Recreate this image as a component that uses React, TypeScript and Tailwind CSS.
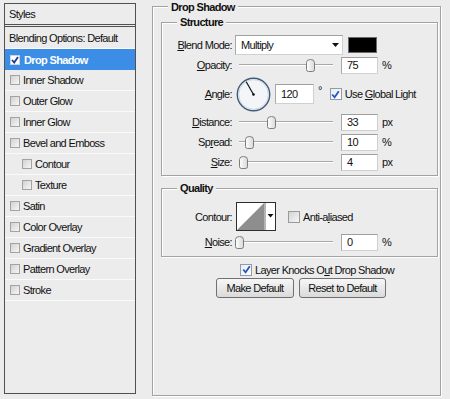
import React from "react";

function LeftCheck({ checked = false }: { checked?: boolean }) {
  if (checked) {
    return (
      <span className="w-[10px] h-[10px] bg-white border border-[#c9d3e3] flex items-center justify-center shrink-0">
        <svg width="8" height="8" viewBox="0 0 8 8">
          <path d="M1 4 L3.2 6.5 L7 1" stroke="#1e3a8a" strokeWidth="1.8" fill="none" />
        </svg>
      </span>
    );
  }
  return (
    <span className="w-[10px] h-[10px] border border-[#a3a3a3] bg-linear-to-br from-[#d2d2d2] to-[#f6f6f6] shrink-0" />
  );
}

function Check({ checked = false }: { checked?: boolean }) {
  if (checked) {
    return (
      <span className="w-[12px] h-[12px] bg-linear-to-br from-[#e8ecf2] to-[#ffffff] border border-[#8c9bb0] flex items-center justify-center shrink-0">
        <svg width="9" height="9" viewBox="0 0 9 9">
          <path d="M1.2 4.5 L3.6 7.3 L7.8 1.2" stroke="#2a56b8" strokeWidth="1.8" fill="none" />
        </svg>
      </span>
    );
  }
  return (
    <span className="w-[12px] h-[12px] border border-[#9a9a9a] bg-linear-to-br from-[#d4d4d4] to-[#f6f6f6] shrink-0" />
  );
}

function Slider({ pos }: { pos: number }) {
  return (
    <div className="relative w-[100px] h-[20px] shrink-0">
      <div className="absolute left-[3px] right-[3px] top-[9px] h-[2px] border-t border-[#a8a8a8] border-b border-b-white" />
      <svg
        width="9"
        height="13"
        viewBox="0 0 9 13"
        className="absolute top-[4px]"
        style={{ left: pos - 4.5 }}
      >
        <defs>
          <linearGradient id="tg" x1="0" y1="0" x2="1" y2="0">
            <stop offset="0" stopColor="#ffffff" />
            <stop offset="1" stopColor="#d8d8d8" />
          </linearGradient>
        </defs>
        <path d="M0.5 3.5 Q0.5 0.5 4.5 0.5 Q8.5 0.5 8.5 3.5 L8.5 10.5 Q8.5 12.5 6.5 12.5 L2.5 12.5 Q0.5 12.5 0.5 10.5 Z" fill="url(#tg)" stroke="#7c7c7c" />
      </svg>
    </div>
  );
}

function NumBox({ value, w = "w-[37px] h-[17px]" }: { value: string; w?: string }) {
  return (
    <div className={`${w} bg-white border border-[#d0d0d0] border-t-[#9e9e9e] border-l-[#a8a8a8] flex items-center pl-[5px] shrink-0`}>
      {value}
    </div>
  );
}

function SliderRow({
  label,
  pos,
  value,
  unit,
}: {
  label: React.ReactNode;
  pos: number;
  value: string;
  unit: string;
}) {
  return (
    <div className="h-[20px] flex items-center">
      <div className="w-[70px] text-right shrink-0">{label}</div>
      <div className="ml-[4px]">
        <Slider pos={pos} />
      </div>
      <div className="ml-[5px]">
        <NumBox value={value} />
      </div>
      <span className="ml-[4px]">{unit}</span>
    </div>
  );
}

const leftItems: { label: string; indent?: boolean }[] = [
  { label: "Inner Shadow" },
  { label: "Outer Glow" },
  { label: "Inner Glow" },
  { label: "Bevel and Emboss" },
  { label: "Contour", indent: true },
  { label: "Texture", indent: true },
  { label: "Satin" },
  { label: "Color Overlay" },
  { label: "Gradient Overlay" },
  { label: "Pattern Overlay" },
  { label: "Stroke" },
];

export default function App() {
  return (
    <div className="w-[450px] h-[399px] bg-[#ececec] flex items-start overflow-hidden text-[11px] leading-[14px] tracking-[-0.65px] text-[#111] font-['Liberation_Sans',Arial,sans-serif]">
      {/* Left styles panel */}
      <div className="ml-[4px] mt-[3px] w-[132px] h-[391px] border border-[#505050] flex flex-col shrink-0">
        <div className="h-[23px] flex items-center pl-[4px] border-b-[3px] border-double border-[#505050]">
          Styles
        </div>
        <div className="h-[22px] flex items-center pl-[4px] border-b border-[#fafafa]">
          Blending Options: Default
        </div>
        <div className="h-[21px] flex items-center pl-[5px] bg-[#3b8de6] text-white font-bold">
          <LeftCheck checked />
          <span className="ml-[4px]">Drop Shadow</span>
        </div>
        {leftItems.map((it) => (
          <div
            key={it.label}
            className={
              it.indent
                ? "h-[21px] flex items-center pl-[17px] border-b border-[#fafafa]"
                : "h-[21px] flex items-center pl-[5px] border-b border-[#fafafa]"
            }
          >
            <LeftCheck />
            <span className="ml-[3px]">{it.label}</span>
          </div>
        ))}
      </div>

      {/* Right: Drop Shadow group */}
      <div className="ml-[16px] mt-[6px] w-[289px] h-[390px] relative border border-[#a2a2a2] shadow-[inset_1px_1px_0_#fff,1px_1px_0_#fff] flex flex-col items-start shrink-0">
        <span className="absolute left-[15px] top-[-7px] px-[3px] bg-[#ececec] font-bold">Drop Shadow</span>

        {/* Structure */}
        <div className="ml-[8px] mt-[15px] w-[277px] relative border border-[#a2a2a2] shadow-[inset_1px_1px_0_#fff,1px_1px_0_#fff] pt-[12px] pb-[3px] flex flex-col">
          <span className="absolute left-[15px] top-[-8px] px-[3px] bg-[#ececec] font-bold">Structure</span>

          <div className="h-[20px] flex items-center">
            <div className="w-[70px] text-right shrink-0">
              <span className="underline">B</span>lend Mode:
            </div>
            <div className="ml-[3px] w-[108px] h-[20px] bg-white border border-[#d0d0d0] border-t-[#a0a0a0] border-l-[#a8a8a8] flex items-center justify-between pl-[5px] pr-[3px]">
              <span>Multiply</span>
              <svg width="7" height="4" viewBox="0 0 7 4">
                <path d="M0 0 L7 0 L3.5 4 Z" fill="#111" />
              </svg>
            </div>
            <div className="ml-[5px] w-[29px] h-[16px] bg-black border border-[#6a6a6a]" />
          </div>

          <SliderRow
            label={
              <>
                <span className="underline">O</span>pacity:
              </>
            }
            pos={74}
            value="75"
            unit="%"
          />

          <div className="mt-[1px] h-[36px] flex items-center">
            <div className="w-[70px] text-right shrink-0">
              <span className="underline">A</span>ngle:
            </div>
            <svg width="35" height="35" viewBox="0 0 35 35" className="ml-[4px] shrink-0">
              <circle cx="17.5" cy="17.5" r="16.2" fill="#f3f5f8" stroke="#3f5a7a" strokeWidth="1.4" />
              <circle cx="17.5" cy="17.5" r="14.8" fill="none" stroke="#c9d2dc" strokeWidth="0.8" />
              <line x1="17.5" y1="17.5" x2="10.2" y2="4.8" stroke="#111" strokeWidth="1.2" />
              <circle cx="17.5" cy="17.5" r="1.3" fill="#111" />
            </svg>
            <div className="ml-[4px]">
              <NumBox value="120" w="w-[39px] h-[20px]" />
            </div>
            <span className="ml-[4px] self-start mt-[9px] leading-[10px]">°</span>
            <div className="ml-[8px] flex items-center">
              <Check checked />
              <span className="ml-[3px]">
                Use <span className="underline">G</span>lobal Light
              </span>
            </div>
          </div>

          <SliderRow
            label={
              <>
                <span className="underline">D</span>istance:
              </>
            }
            pos={35}
            value="33"
            unit="px"
          />
          <SliderRow
            label={
              <>
                Sp<span className="underline">r</span>ead:
              </>
            }
            pos={13}
            value="10"
            unit="%"
          />
          <SliderRow
            label={
              <>
                <span className="underline">S</span>ize:
              </>
            }
            pos={7}
            value="4"
            unit="px"
          />
        </div>

        {/* Quality */}
        <div className="ml-[8px] mt-[12px] w-[277px] relative border border-[#a2a2a2] shadow-[inset_1px_1px_0_#fff,1px_1px_0_#fff] pt-[13px] pb-[4px] flex flex-col">
          <span className="absolute left-[15px] top-[-8px] px-[3px] bg-[#ececec] font-bold">Quality</span>

          <div className="h-[29px] flex items-center">
            <div className="w-[70px] text-right shrink-0">Contour:</div>
            <svg width="40" height="29" viewBox="0 0 40 29" className="ml-[4px] shrink-0">
              <rect x="0.5" y="0.5" width="39" height="28" fill="#ffffff" stroke="#2e2e2e" />
              <polygon points="1,28 28,1 28,28" fill="#8e8e8e" />
              <rect x="28" y="1" width="2" height="27" fill="#b5b5b5" />
              <path d="M31.5 12 L37.5 12 L34.5 15.5 Z" fill="#111" />
            </svg>
            <div className="ml-[12px] flex items-center">
              <Check />
              <span className="ml-[3px]">
                Anti-a<span className="underline">l</span>iased
              </span>
            </div>
          </div>

          <div className="mt-[1px]">
            <SliderRow
              label={
                <>
                  <span className="underline">N</span>oise:
                </>
              }
              pos={3}
              value="0"
              unit="%"
            />
          </div>
        </div>

        <div className="ml-[87px] mt-[4px] h-[17px] flex items-center">
          <Check checked />
          <span className="ml-[3px]">
            Layer Knocks O<span className="underline">u</span>t Drop Shadow
          </span>
        </div>

        <div className="ml-[63px] flex gap-[5px]">
          <button className="w-[78px] h-[20px] rounded-[3px] border border-[#707070] bg-linear-to-b from-[#f7f7f7] to-[#dadada] flex items-center justify-center text-[#111]">
            Make Default
          </button>
          <button className="w-[87px] h-[20px] rounded-[3px] border border-[#707070] bg-linear-to-b from-[#f7f7f7] to-[#dadada] flex items-center justify-center text-[#111]">
            Reset to Default
          </button>
        </div>
      </div>
    </div>
  );
}
